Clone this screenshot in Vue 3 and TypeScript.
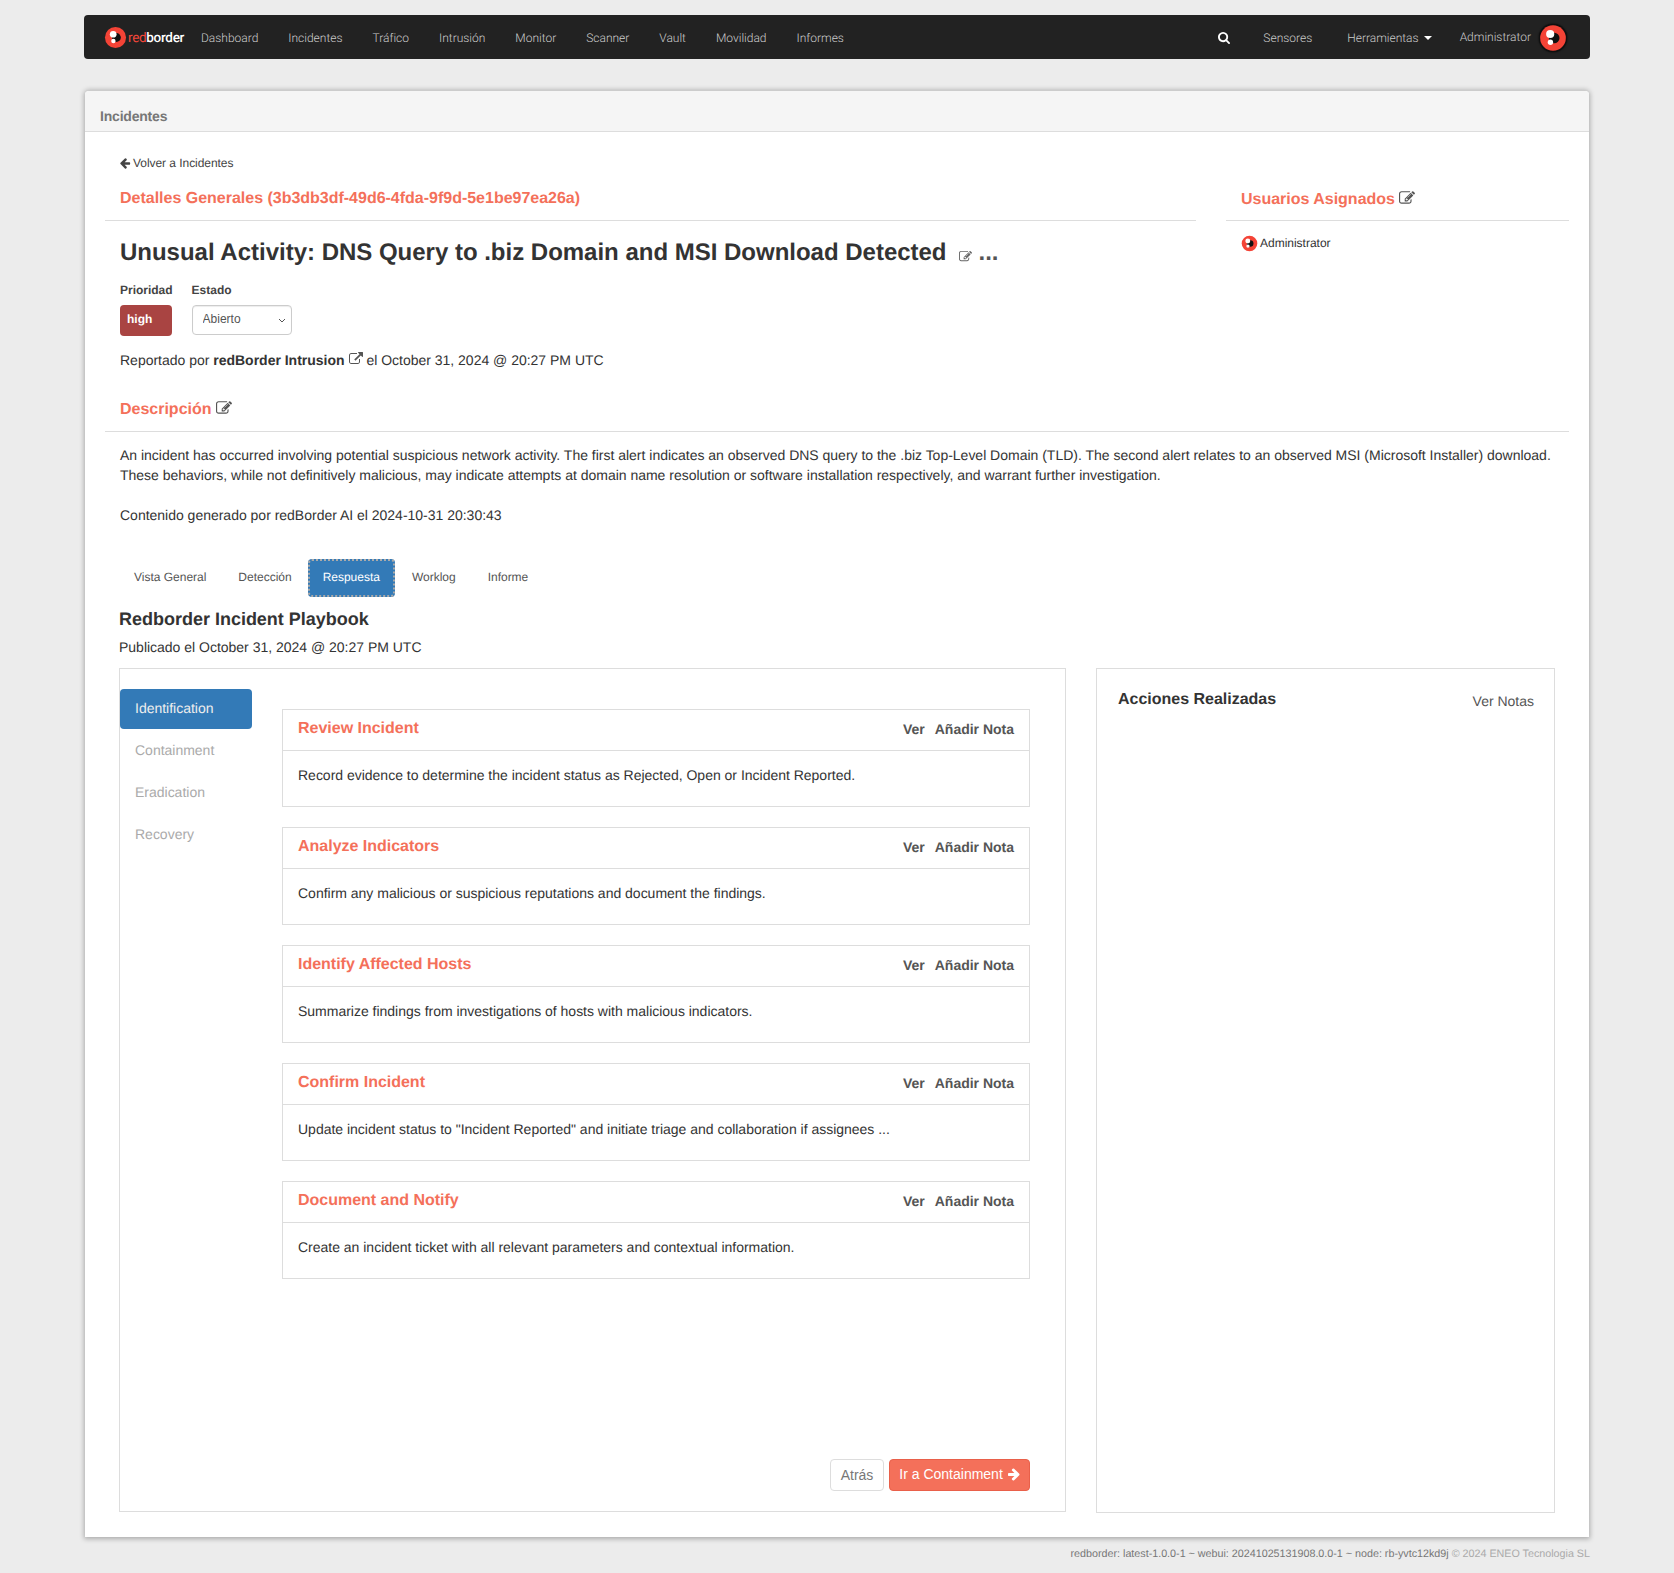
<script setup lang="ts">
const navLinks = ['Dashboard', 'Incidentes', 'Tráfico', 'Intrusión', 'Monitor', 'Scanner', 'Vault', 'Movilidad', 'Informes']
const tabs = ['Vista General', 'Detección', 'Respuesta', 'Worklog', 'Informe']
const phases = ['Identification', 'Containment', 'Eradication', 'Recovery']

const tasks = [
  { title: 'Review Incident', text: 'Record evidence to determine the incident status as Rejected, Open or Incident Reported.' },
  { title: 'Analyze Indicators', text: 'Confirm any malicious or suspicious reputations and document the findings.' },
  { title: 'Identify Affected Hosts', text: 'Summarize findings from investigations of hosts with malicious indicators.' },
  { title: 'Confirm Incident', text: 'Update incident status to "Incident Reported" and initiate triage and collaboration if assignees ...' },
  { title: 'Document and Notify', text: 'Create an incident ticket with all relevant parameters and contextual information.' },
]

const editPath = 'M888 1184l116-116-152-152-116 116v56h96v96h56zm440-720q-16-16-33 1l-350 350q-17 17-1 33t33-1l350-350q17-17 1-33zm80 594v190q0 119-84.5 203.5t-203.5 84.5h-832q-119 0-203.5-84.5t-84.5-203.5v-832q0-119 84.5-203.5t203.5-84.5h832q63 0 117 25 15 7 18 23 3 17-9 29l-49 49q-14 14-32 8-23-6-45-6h-832q-66 0-113 47t-47 113v832q0 66 47 113t113 47h832q66 0 113-47t47-113v-126q0-13 9-22l64-64q15-15 35-7t20 29zm-96-738l288 288-672 672h-288v-288zm444 132l-92 92-288-288 92-92q28-28 68-28t68 28l152 152q28 28 28 68t-28 68z'
const linkPath = 'M1408 928v320q0 119-84.5 203.5t-203.5 84.5h-832q-119 0-203.5-84.5t-84.5-203.5v-832q0-119 84.5-203.5t203.5-84.5h704q14 0 23 9t9 23v64q0 14-9 23t-23 9h-704q-66 0-113 47t-47 113v832q0 66 47 113t113 47h832q66 0 113-47t47-113v-320q0-14 9-23t23-9h64q14 0 23 9t9 23zm384-864v512q0 26-19 45t-45 19-45-19l-176-176-652 652q-10 10-23 10t-23-10l-114-114q-10-10-10-23t10-23l652-652-176-176q-19-19-19-45t19-45 45-19h512q26 0 45 19t19 45z'
const leftPath = 'M1664 896v128q0 53-32.5 90.5t-84.5 37.5h-704l293 294q38 36 38 90t-38 90l-75 76q-37 37-90 37-52 0-91-37l-651-652q-37-37-37-90 0-52 37-91l651-650q38-38 91-38 52 0 90 38l75 74q38 38 38 91t-38 91l-293 293h704q52 0 84.5 37.5t32.5 90.5z'
const rightPath = 'M1600 960q0 54-37 91l-651 651q-39 37-91 37-51 0-90-37l-75-75q-38-38-38-91t38-91l293-293h-704q-52 0-84.5-37.5t-32.5-90.5v-128q0-53 32.5-90.5t84.5-37.5h704l-293-294q-38-36-38-90t38-90l75-75q38-38 90-38 53 0 91 38l651 651q37 35 37 90z'
const searchPath = 'M1152 704q0-185-131.5-316.5t-316.5-131.5-316.5 131.5-131.5 316.5 131.5 316.5 316.5 131.5 316.5-131.5 131.5-316.5zm512 832q0 52-38 90t-90 38q-54 0-90-38l-343-342q-179 124-399 124-143 0-273.5-55.5t-225-150-150-225-55.5-273.5 55.5-273.5 150-225 225-150 273.5-55.5 273.5 55.5 225 150 150 225 55.5 273.5q0 220-124 399l343 343q37 37 37 90z'
</script>

<template>
  <div class="page">
    <svg class="defs" width="0" height="0">
      <symbol id="rb-logo" viewBox="0 0 24 24">
        <circle cx="12" cy="12" r="11" fill="#f44336" />
        <circle cx="13" cy="12" r="4.6" fill="#111" />
        <circle cx="9.6" cy="8.6" r="3.5" fill="#fff" />
        <circle cx="9.8" cy="15.6" r="2.3" fill="#fff" />
      </symbol>
    </svg>

    <nav class="navbar">
      <div class="brand">
        <svg class="brand-logo"><use href="#rb-logo" /></svg>
        <span class="brand-name"><span class="brand-red">red</span>border</span>
      </div>
      <ul class="nav-links">
        <li v-for="link in navLinks" :key="link">{{ link }}</li>
      </ul>
      <div class="nav-right">
        <svg class="nav-search" viewBox="0 0 1664 1664"><path :d="searchPath" /></svg>
        <span class="nav-item sensors">Sensores</span>
        <span class="nav-item tools">Herramientas<i class="caret"></i></span>
        <span class="nav-item admin">Administrator</span>
        <svg class="nav-avatar"><use href="#rb-logo" /></svg>
      </div>
    </nav>

    <section class="panel">
      <header class="panel-heading">Incidentes</header>
      <div class="panel-body">
        <a class="back-link">
          <svg class="icon-back" viewBox="0 0 1792 1792"><path :d="leftPath" /></svg>
          Volver a Incidentes
        </a>

        <div class="top-row">
          <div class="top-main">
            <h3 class="section-title general">Detalles Generales (3b3db3df-49d6-4fda-9f9d-5e1be97ea26a)</h3>
            <div class="incident-title">
              <h1>Unusual Activity: DNS Query to .biz Domain and MSI Download Detected</h1>
              <svg class="icon-title" viewBox="0 0 1792 1792"><path :d="editPath" /></svg>
              <span class="dots">...</span>
            </div>
            <div class="meta">
              <div class="meta-group">
                <label>Prioridad</label>
                <span class="badge-high">high</span>
              </div>
              <div class="meta-group">
                <label>Estado</label>
                <div class="select-wrap">
                  <select class="state-select">
                    <option>Abierto</option>
                    <option>Cerrado</option>
                  </select>
                  <svg class="select-arrow" viewBox="0 0 8 5"><path d="M1 1l3 3 3-3" /></svg>
                </div>
              </div>
            </div>
            <p class="reported">
              Reportado por <strong>redBorder Intrusion</strong>
              <svg class="icon-inline" viewBox="0 0 1792 1792"><path :d="linkPath" /></svg>
              el October 31, 2024 @ 20:27 PM UTC
            </p>
          </div>
          <aside class="top-side">
            <h3 class="section-title users">
              Usuarios Asignados
              <svg class="icon-heading" viewBox="0 0 1792 1792"><path :d="editPath" /></svg>
            </h3>
            <div class="assigned">
              <svg class="assigned-avatar"><use href="#rb-logo" /></svg>
              Administrator
            </div>
          </aside>
        </div>

        <h3 class="section-title description">
          Descripción
          <svg class="icon-heading" viewBox="0 0 1792 1792"><path :d="editPath" /></svg>
        </h3>
        <div class="description-text">
          <p>An incident has occurred involving potential suspicious network activity. The first alert indicates an observed DNS query to the .biz Top-Level Domain (TLD). The second alert relates to an observed MSI (Microsoft Installer) download. These behaviors, while not definitively malicious, may indicate attempts at domain name resolution or software installation respectively, and warrant further investigation.</p>
          <p class="generated">Contenido generado por redBorder AI el 2024-10-31 20:30:43</p>
        </div>

        <ul class="tabs">
          <li v-for="tab in tabs" :key="tab" :class="{ active: tab === 'Respuesta' }">{{ tab }}</li>
        </ul>

        <div class="playbook">
          <h2>Redborder Incident Playbook</h2>
          <p class="published">Publicado el October 31, 2024 @ 20:27 PM UTC</p>

          <div class="playbook-columns">
            <div class="playbook-box">
              <ul class="phases">
                <li v-for="(phase, index) in phases" :key="phase" :class="{ active: index === 0 }">{{ phase }}</li>
              </ul>
              <div class="phase-content">
                <div class="task-list">
                  <article v-for="task in tasks" :key="task.title" class="task">
                    <div class="task-head">
                      <h4>{{ task.title }}</h4>
                      <div class="task-actions">
                        <span>Ver</span>
                        <span>Añadir Nota</span>
                      </div>
                    </div>
                    <div class="task-body">{{ task.text }}</div>
                  </article>
                </div>
                <div class="phase-buttons">
                  <button class="btn-back" type="button">Atrás</button>
                  <button class="btn-next" type="button">
                    Ir a Containment
                    <svg viewBox="0 0 1792 1792"><path :d="rightPath" /></svg>
                  </button>
                </div>
              </div>
            </div>

            <div class="actions-box">
              <h4>Acciones Realizadas</h4>
              <span>Ver Notas</span>
            </div>
          </div>
        </div>
      </div>
    </section>

    <footer class="footer">
      redborder: latest-1.0.0-1 ~ webui: 20241025131908.0.0-1 ~ node: rb-yvtc12kd9j <span>© 2024 ENEO Tecnologia SL</span>
    </footer>
  </div>
</template>

<style>
html,
body {
  background: #ececec;
}
</style>

<style scoped>
.page {
  box-sizing: border-box;
  width: 1674px;
  height: 1573px;
  padding: 15px 84px 0;
  font-family: "Liberation Sans", Arial, sans-serif;
  font-size: 14px;
  line-height: 20px;
  letter-spacing: -0.01px;
  color: #333;
  text-rendering: geometricPrecision;
}

.defs {
  position: absolute;
}

.navbar {
  height: 44px;
  box-sizing: border-box;
  display: flex;
  align-items: center;
  padding: 1px 23px 0 20px;
  background: #222;
  border-radius: 4px;
  font-family: Roboto, sans-serif;
  font-weight: 300;
  font-size: 12px;
  color: #ccc;
}

.brand {
  display: flex;
  align-items: center;
  width: 97px;
}

.brand-logo {
  width: 23px;
  height: 23px;
  flex: none;
}

.brand-name {
  margin-left: 1px;
  font-size: 13.5px;
  font-weight: 500;
  letter-spacing: -0.3px;
  color: #fff;
}

.brand-red {
  color: #f4473a;
  font-weight: 400;
}

.nav-links {
  display: flex;
  gap: 30px;
  margin: 0;
  padding: 0;
  list-style: none;
}

.nav-right {
  display: flex;
  align-items: center;
  margin-left: auto;
}

.nav-search {
  width: 12px;
  height: 12px;
  margin-right: 33px;
  fill: #fff;
}

.tools {
  margin-left: 35px;
}

.caret {
  display: inline-block;
  margin-left: 5px;
  vertical-align: middle;
  border-top: 4px solid #fff;
  border-left: 4px solid transparent;
  border-right: 4px solid transparent;
}

.admin {
  margin-left: 28px;
  position: relative;
  top: -1px;
}

.nav-avatar {
  width: 28px;
  height: 28px;
  margin-left: 8px;
  border-radius: 50%;
  background: #111;
  box-shadow: 0 0 2px #000;
}

.panel {
  margin: 31px 1px 0;
  height: 1447px;
  box-sizing: border-box;
  background: #fff;
  border-top: 1px solid #ccc;
  border-radius: 4px 4px 0 0;
  box-shadow: 0 1px 5px 1px rgba(0, 0, 0, 0.28);
}

.panel-heading {
  height: 41px;
  box-sizing: border-box;
  padding: 15px 15px 0;
  background: #f5f5f5;
  border-bottom: 1px solid #ddd;
  border-radius: 4px 4px 0 0;
  font-weight: 700;
  letter-spacing: -0.2px;
  color: #777;
}

.panel-body {
  padding: 21px 20px 0;
}

.back-link {
  display: flex;
  align-items: center;
  height: 20px;
  margin-left: 14px;
  font-size: 12px;
  letter-spacing: -0.05px;
  color: #444;
}

.icon-back {
  width: 12px;
  height: 12px;
  margin-right: 2px;
  fill: #444;
}

.top-row {
  display: flex;
  justify-content: space-between;
}

.top-main {
  width: 1091px;
}

.top-side {
  width: 343px;
}

.section-title {
  margin: 0;
  padding: 0 15px;
  font-size: 16px;
  line-height: 20px;
  font-weight: 700;
  color: #f4705a;
  border-bottom: 1px solid #ddd;
}

.general {
  margin-top: 10px;
  padding-top: 6px;
  padding-bottom: 11px;
}

.users {
  margin-top: 11px;
  padding-top: 6px;
  padding-bottom: 10px;
}

.description {
  margin-top: 30px;
  padding-bottom: 11px;
}

.icon-heading {
  width: 16px;
  height: 16px;
  vertical-align: -2px;
  fill: #555;
}

.assigned {
  display: flex;
  align-items: center;
  gap: 2px;
  margin: 12px 15px 0;
  font-size: 12px;
  color: #333;
}

.assigned-avatar {
  width: 17px;
  height: 17px;
}

.incident-title {
  display: flex;
  align-items: baseline;
  margin: 17px 15px 0;
}

.incident-title h1 {
  margin: 0;
  font-size: 24px;
  line-height: 30px;
  font-weight: 700;
}

.icon-title {
  width: 13px;
  height: 13px;
  margin-left: 12px;
  fill: #666;
  align-self: flex-end;
  margin-bottom: 5px;
}

.dots {
  margin-left: 7px;
  font-size: 24px;
  line-height: 30px;
  font-weight: 700;
  color: #555;
}

.meta {
  display: flex;
  gap: 19px;
  margin: 13px 15px 0;
}

.meta-group label {
  display: block;
  font-size: 12px;
  font-weight: 700;
  line-height: 18px;
  margin-bottom: 6px;
  color: #444;
}

.badge-high {
  display: block;
  box-sizing: border-box;
  width: 52px;
  height: 31px;
  padding: 4px 7px;
  background: #a94442;
  border-radius: 4px;
  font-size: 12px;
  font-weight: 700;
  color: #fff;
}

.select-wrap {
  position: relative;
}

.state-select {
  display: block;
  box-sizing: border-box;
  width: 100px;
  height: 30px;
  padding: 3px 10px 5px;
  background: #fff;
  border: 1px solid #ccc;
  border-radius: 4px;
  font-family: inherit;
  font-size: 12px;
  color: #555;
  box-shadow: inset 0 1px 1px rgba(0, 0, 0, 0.075);
  appearance: none;
}

.select-arrow {
  position: absolute;
  right: 6px;
  top: 13px;
  width: 8px;
  height: 5px;
  fill: none;
  stroke: #555;
  stroke-width: 1;
}

.reported {
  margin: 14px 15px 0;
}

.icon-inline {
  width: 14px;
  height: 14px;
  margin-left: 4px;
  vertical-align: -1px;
  fill: #555;
}

.description-text {
  margin: 13px 15px 0;
}

.description-text p {
  margin: 0;
}

.description-text .generated {
  margin-top: 20px;
}

.tabs {
  display: flex;
  gap: 2px;
  margin: 34px 0 0 14px;
  padding: 0;
  list-style: none;
  font-size: 12px;
}

.tabs li {
  padding: 9px 15px 10px;
  line-height: 19px;
  color: #555;
  border-radius: 4px;
}

.tabs li.active {
  margin-left: -1px;
  background: #337ab7;
  color: #fff;
  outline: 2px dotted #aaa;
  outline-offset: -2px;
}

.playbook {
  margin: 0 14px;
}

.playbook h2 {
  margin: 12px 0 0;
  font-size: 18px;
  line-height: 20px;
  font-weight: 700;
}

.published {
  margin: 8px 0 0;
}

.playbook-columns {
  display: flex;
  gap: 30px;
  margin-top: 11px;
}

.playbook-box {
  display: flex;
  width: 947px;
  height: 844px;
  box-sizing: border-box;
  border: 1px solid #ddd;
}

.phases {
  width: 132px;
  margin: 20px 0 0;
  padding: 0;
  list-style: none;
}

.phases li {
  height: 40px;
  margin-bottom: 2px;
  padding: 9px 15px;
  box-sizing: border-box;
  border-radius: 4px;
  color: #aaa;
}

.phases li.active {
  background: #337ab7;
  color: #eee;
}

.phase-content {
  display: flex;
  flex-direction: column;
  width: 748px;
  margin: 40px 0 0 30px;
}

.task-list {
  display: flex;
  flex-direction: column;
  gap: 20px;
}

.task {
  height: 98px;
  box-sizing: border-box;
  border: 1px solid #ddd;
}

.task-head {
  display: flex;
  align-items: center;
  justify-content: space-between;
  height: 41px;
  box-sizing: border-box;
  padding: 0 15px;
  border-bottom: 1px solid #ddd;
}

.task-head h4 {
  margin: -2px 0 0;
  font-size: 16px;
  font-weight: 700;
  color: #f4705a;
}

.task-actions {
  display: flex;
  gap: 10px;
  margin-top: -2px;
  font-weight: 700;
  color: #555;
}

.task-body {
  padding: 14px 15px 0;
}

.phase-buttons {
  display: flex;
  justify-content: flex-end;
  gap: 5px;
  margin-top: 180px;
}

.phase-buttons button {
  height: 32px;
  padding-bottom: 2px;
  box-sizing: border-box;
  border-radius: 4px;
  font-family: inherit;
  font-size: 14px;
}

.btn-back {
  width: 54px;
  background: #fff;
  border: 1px solid #ddd;
  color: #777;
}

.btn-next {
  width: 141px;
  padding: 0 0 2px 1px;
  background: #f4705a;
  border: 1px solid #e9604a;
  color: #fff;
}

.btn-next svg {
  width: 14px;
  height: 14px;
  vertical-align: -2px;
  fill: #fff;
}

.actions-box {
  display: flex;
  justify-content: space-between;
  width: 459px;
  height: 845px;
  box-sizing: border-box;
  padding: 21px 20px 0 21px;
  border: 1px solid #ddd;
}

.actions-box h4 {
  margin: 0;
  font-size: 16px;
  line-height: 20px;
  font-weight: 700;
}

.actions-box span {
  margin-top: 1px;
  color: #555;
}

.footer {
  margin-top: 10px;
  text-align: right;
  font-size: 10.75px;
  line-height: 14px;
  color: #777;
}

.footer span {
  color: #aaa;
}
</style>
